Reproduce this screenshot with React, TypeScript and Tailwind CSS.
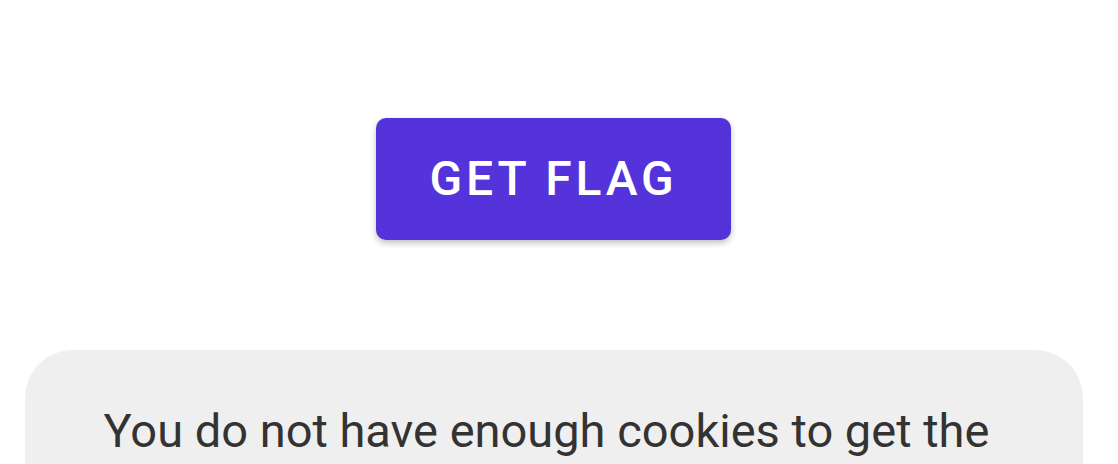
export default function App() {
  return (
    <div
      className="w-[1118px] h-[464px] overflow-hidden bg-white flex flex-col items-center pr-[11px]"
      style={{ fontFamily: "Roboto, 'Liberation Sans', sans-serif" }}
    >
      <button className="shrink-0 mt-[118px] w-[355px] h-[122px] rounded-[10px] bg-[#5533db] text-white text-[48px] font-medium tracking-[0.08em] shadow-[0_3px_6px_rgba(0,0,0,0.25)]">
        GET FLAG
      </button>
      <div className="shrink-0 mt-[110px] w-[1058px] rounded-[48px] bg-[#efefef] pl-[60px] pr-[74px] pt-[49px] pb-[40px] text-center text-[47px] leading-[64px] text-[#333333]">
        You do not have enough cookies to get the flag
      </div>
    </div>
  );
}
